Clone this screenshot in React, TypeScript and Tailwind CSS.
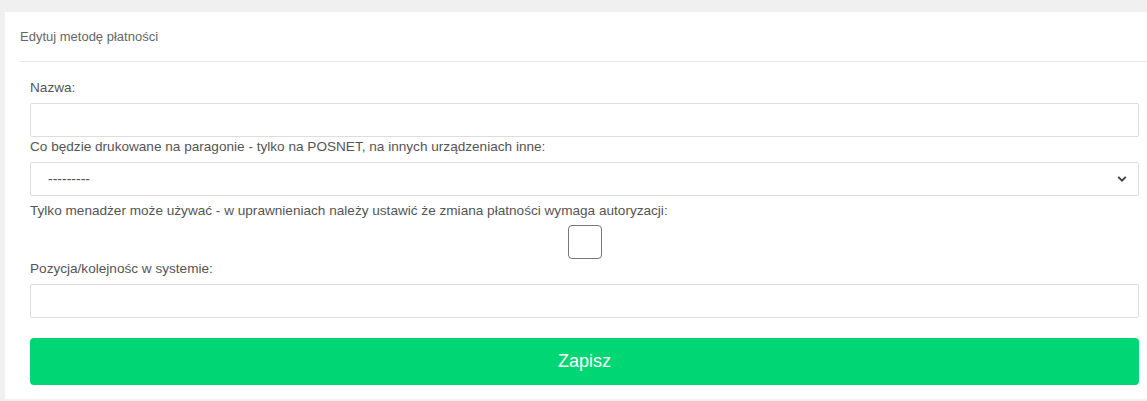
import React from 'react';

const Label: React.FC<{ children: React.ReactNode; className?: string }> = ({ children, className = '' }) => (
  <label className={`block text-[13.6px] leading-[20px] text-[#555] ${className}`}>{children}</label>
);

const App: React.FC = () => {
  return (
    <div className="min-h-[401px] bg-[#f0f0f0] pt-[12px] pl-[5px] pb-[2px] font-['Liberation_Sans',Arial,sans-serif]">
      <div className="bg-white">
        <div className="px-[15px] h-[49px] flex items-center text-[13px] text-[#666]">
          Edytuj metodę płatności
        </div>
        <div className="ml-[15px] border-t border-[#e8e8e8]" />
        <form className="pl-[25px] pr-[8px] pt-[16px] pb-[14px]" onSubmit={(e) => e.preventDefault()}>
          <Label className="mb-[5px]">Nazwa:</Label>
          <input
            type="text"
            className="block w-full h-[34px] border border-[#ddd] rounded-[2px] px-3 text-[13px] outline-none"
          />

          <Label className="mb-[5px]">
            Co będzie drukowane na paragonie - tylko na POSNET, na innych urządzeniach inne:
          </Label>
          <div className="relative">
            <select className="block w-full h-[34px] appearance-none border border-[#ddd] rounded-[2px] bg-white pl-[17px] pr-8 text-[14px] text-[#555] outline-none">
              <option>---------</option>
            </select>
            <svg
              className="pointer-events-none absolute right-[12px] top-1/2 -translate-y-1/2"
              width="10"
              height="7"
              viewBox="0 0 10 7"
            >
              <path d="M1.2 1.4 L5 5.2 L8.8 1.4" fill="none" stroke="#444" strokeWidth="2" />
            </svg>
          </div>

          <Label className="mt-[5px] mb-[4px]">
            Tylko menadżer może używać - w uprawnieniach należy ustawić że zmiana płatności wymaga autoryzacji:
          </Label>
          <div className="flex justify-center">
            <input
              type="checkbox"
              className="appearance-none w-[34px] h-[34px] border border-[#777] rounded-[4px] bg-white"
            />
          </div>

          <Label className="mb-[5px]">Pozycja/kolejnośc w systemie:</Label>
          <input
            type="text"
            className="block w-full h-[34px] border border-[#ddd] rounded-[2px] px-3 text-[13px] outline-none"
          />

          <button
            type="submit"
            className="mt-[20px] block w-full h-[47px] rounded-[4px] bg-[#00d674] text-white text-[18px]"
          >
            Zapisz
          </button>
        </form>
      </div>
    </div>
  );
};

export default App;
